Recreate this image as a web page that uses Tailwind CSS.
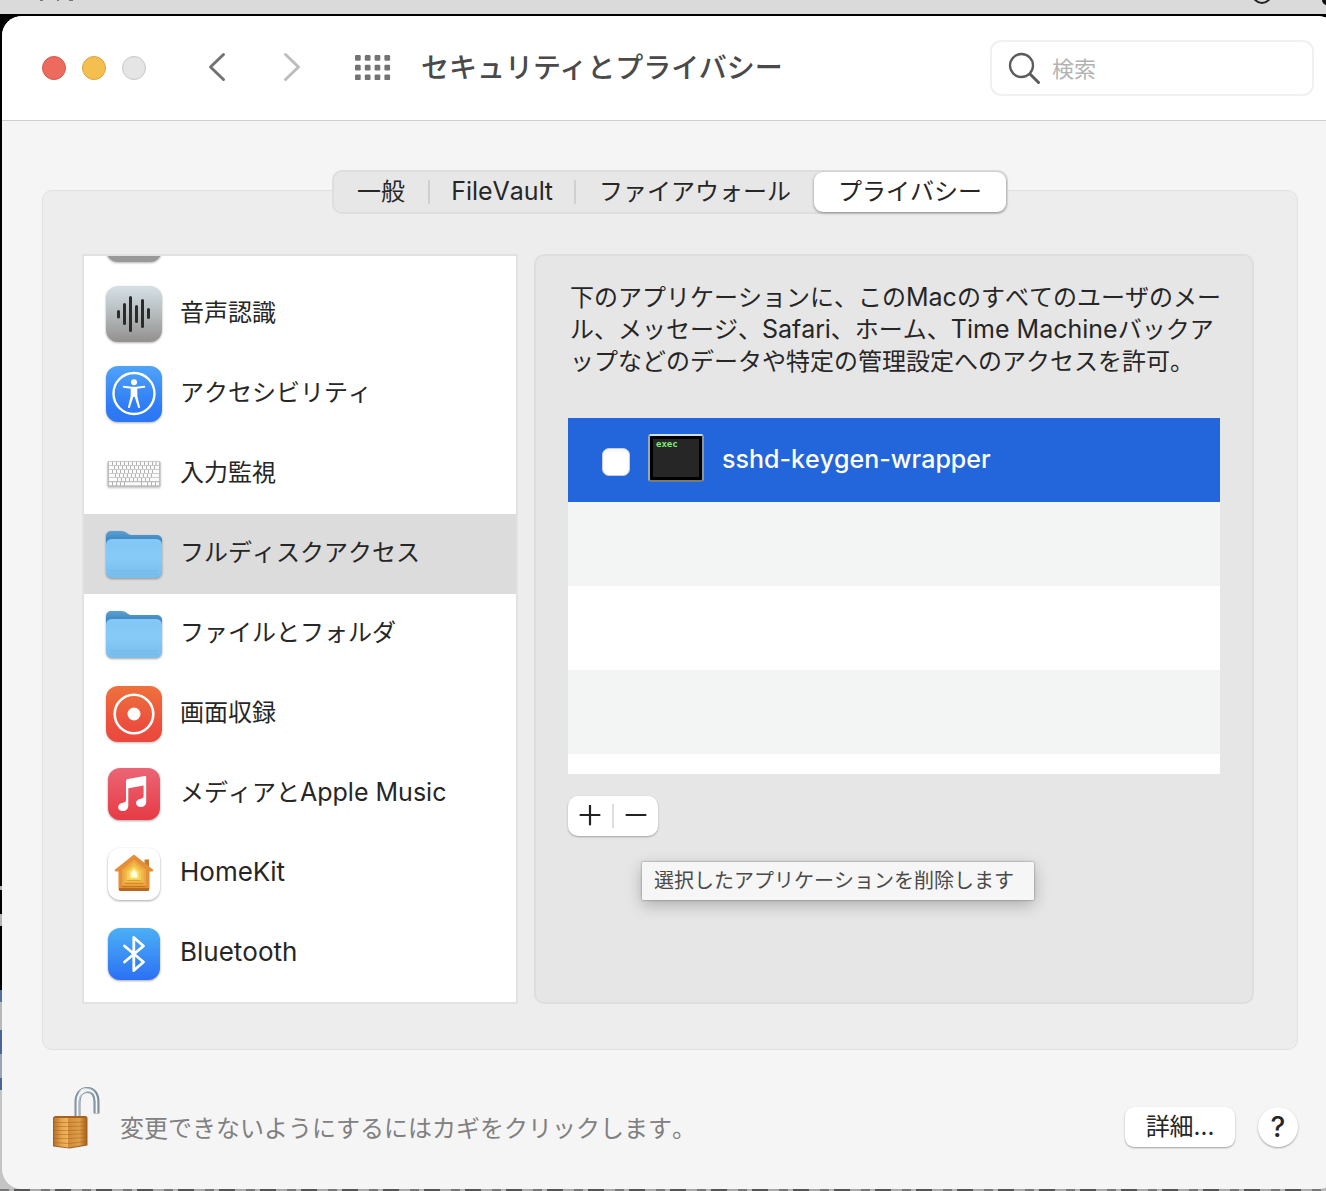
<!DOCTYPE html>
<html lang="ja">

<head>
    <meta charset="UTF-8">
    <meta name="viewport" content="width=device-width, initial-scale=1.0">
    <script src="https://cdn.jsdelivr.net/npm/@tailwindcss/browser@4"></script>
    <title>セキュリティとプライバシー</title>
</head>

<body class="relative flex min-h-screen flex-col overflow-hidden bg-black font-['Inter','Noto_Sans_CJK_JP',sans-serif] text-2xl text-[#262626] [font-kerning:none]">
    <!-- Desktop behind the window -->
    <div class="absolute inset-0 flex flex-col" aria-hidden="true">
        <div class="h-[886px]"></div>
        <div class="h-1 bg-[#b0b0b0]"></div>
        <div class="h-6"></div>
        <div class="h-3 bg-[#b4b4b4]"></div>
        <div class="h-16"></div>
        <div class="h-3 bg-[#5470a0]"></div>
        <div class="h-7 bg-[#b8b8b8]"></div>
        <div class="h-6 bg-[#4a6696]"></div>
        <div class="h-6 bg-[#9aa4b4]"></div>
        <div class="h-3 bg-[#4a6696]"></div>
        <div class="flex-1 bg-[#c4c4c4]"></div>
        <div class="h-[2px] bg-[repeating-linear-gradient(90deg,#777_0_9px,#b5b5b5_9px_14px,#555_14px_30px,#aaa_30px_41px)]"></div>
    </div>

    <!-- Menu bar -->
    <div class="relative mb-[2px] h-[14px] bg-[#dadada]">
        <svg class="h-[14px] w-full" aria-hidden="true">
            <path d="M40 0h3M57 0h2M69 0h4" stroke="#777" stroke-width="2" />
            <svg x="100%" overflow="visible">
                <circle cx="-64" cy="-6" r="9" fill="none" stroke="#222" stroke-width="2" />
                <circle cx="1" cy="0" r="5" fill="#111" />
            </svg>
        </svg>
    </div>

    <div class="relative -mr-3 mb-[2px] ml-[2px] flex flex-1 flex-col overflow-hidden rounded-[20px] bg-[#f5f5f5]">
        <header class="flex h-[105px] items-center border-b border-[#cfcfcf] bg-white pr-6 pl-10">
            <div class="flex gap-4">
                <button aria-label="閉じる" class="size-6 rounded-full border border-[#d9574c] bg-[#ec6a5e]"></button>
                <button aria-label="しまう" class="size-6 rounded-full border border-[#dba33b] bg-[#f5bf4f]"></button>
                <button aria-label="拡大" class="size-6 rounded-full border border-[#c6c6c6] bg-[#e5e5e5]"></button>
            </div>
            <button aria-label="戻る" class="ml-[59px]">
                <svg class="h-8 w-6" viewBox="0 0 24 32" fill="none" stroke="#737373" stroke-width="3" stroke-linecap="round" stroke-linejoin="round">
                    <path d="M18.500 2.500L5.500 15l13 12.500" />
                </svg>
            </button>
            <button aria-label="進む" class="ml-[51px]">
                <svg class="h-8 w-6" viewBox="0 0 24 32" fill="none" stroke="#bdbdbd" stroke-width="3" stroke-linecap="round" stroke-linejoin="round">
                    <path d="M5.500 2.500L18.500 15L5.500 27.500" />
                </svg>
            </button>
            <button aria-label="すべてを表示" class="ml-[51px]">
                <svg class="h-[26px] w-9" viewBox="0 0 36 26" fill="#737373">
                    <g id="dots">
                        <rect x="0" y="0" width="5.700" height="5.700" rx="1.200" />
                        <rect x="9.800" y="0" width="5.700" height="5.700" rx="1.200" />
                        <rect x="19.600" y="0" width="5.700" height="5.700" rx="1.200" />
                        <rect x="29.400" y="0" width="5.700" height="5.700" rx="1.200" />
                    </g>
                    <use href="#dots" y="9.700" />
                    <use href="#dots" y="19.400" />
                </svg>
            </button>
            <h1 class="ml-[30px] text-[28px] leading-8 font-medium text-[#4a4a4a] [font-kerning:auto]">セキュリティとプライバシー</h1>
            <label class="ml-auto flex h-14 w-[324px] items-center gap-3 rounded-[11px] border-2 border-[#f0f0f0] pl-4">
                <svg class="size-8 shrink-0" viewBox="0 0 32 32" fill="none" stroke="#5c5c5c" stroke-linecap="round">
                    <circle cx="13.500" cy="13.500" r="11.500" stroke-width="2.300" />
                    <path d="M22 22L30.500 30.500" stroke-width="3" />
                </svg>
                <input type="search" aria-label="検索" placeholder="検索" class="w-full min-w-0 pt-1 text-[22px] outline-none placeholder:text-[#b3b3b3]">
            </label>
        </header>

        <main class="flex flex-1 flex-col px-10 pt-[69px]">
            <section class="flex flex-col rounded-[10px] border border-[#e1e1e1] bg-[#ededed] pb-[45px]">
                <!-- Tabs -->
                <nav class="-mt-[21px] flex h-11 items-center self-center rounded-[10px] border-2 border-[#dedede] bg-[#e7e7e7]">
                    <button class="h-10 w-[94px]">一般</button>
                    <span class="h-6 w-[2px] bg-[#d0d0d0]"></span>
                    <button class="h-10 w-[144px] text-[25px]">FileVault</button>
                    <span class="h-6 w-[2px] bg-[#d0d0d0]"></span>
                    <button class="h-10 w-[238px]">ファイアウォール</button>
                    <button class="h-10 w-48 rounded-[9px] bg-white shadow-[0_1px_3px_rgba(0,0,0,0.4)]">プライバシー</button>
                </nav>

                <div class="mt-10 flex gap-4 pr-[43px] pl-[39px]">
                    <!-- Categories -->
                    <div class="w-[436px] shrink-0 overflow-hidden border-2 border-[#e2e2e2] bg-white">
                        <ul class="-mt-[62px] mb-2 [&>li>span]:pb-[3px]">
                            <li class="flex h-20 items-center gap-[18px] pl-[22px]">
                                <svg class="size-14 drop-shadow-[0_1px_1px_rgba(0,0,0,0.3)]" viewBox="0 0 56 56">
                                    <rect width="56" height="56" rx="12" fill="#999" />
                                </svg>
                            </li>
                            <li class="flex h-20 items-center gap-[18px] pl-[22px]">
                                <svg class="size-14 drop-shadow-[0_1px_1px_rgba(0,0,0,0.3)]" viewBox="0 0 56 56">
                                    <defs>
                                        <linearGradient id="voice" x2="0" y2="1">
                                            <stop stop-color="#d5e0e6" />
                                            <stop offset=".5" stop-color="#b5bbbd" />
                                            <stop offset="1" stop-color="#93908e" />
                                        </linearGradient>
                                    </defs>
                                    <rect width="56" height="56" rx="12" fill="url(#voice)" />
                                    <path d="M12.500 25.500v5.500M18.500 18.500v19M24.500 11.500v33M30.500 20.500v15M36.500 14.500v26M42.500 23.500v8" stroke="#2b2b2b" stroke-width="3" stroke-linecap="round" />
                                </svg>
                                <span>音声認識</span>
                            </li>
                            <li class="flex h-20 items-center gap-[18px] pl-[22px]">
                                <svg class="size-14 drop-shadow-[0_1px_1px_rgba(0,0,0,0.3)]" viewBox="0 0 56 56">
                                    <defs>
                                        <linearGradient id="access" x2="0" y2="1">
                                            <stop stop-color="#4fa3f8" />
                                            <stop offset=".7" stop-color="#2f7df6" />
                                            <stop offset="1" stop-color="#2c76f5" />
                                        </linearGradient>
                                    </defs>
                                    <rect width="56" height="56" rx="12" fill="url(#access)" />
                                    <circle cx="28" cy="27.500" r="20.500" fill="none" stroke="#fff" stroke-width="2.400" />
                                    <circle cx="28" cy="16.300" r="3" fill="#fff" />
                                    <path d="M17.800 20.800L25.500 21.800h5L38.200 20.800" fill="none" stroke="#fff" stroke-width="2" stroke-linecap="round" />
                                    <path d="M24.800 21h6.400l.2 9.500 2.600 10.500c.2 1.200-1.500 1.500-1.900.4L28.700 31h-1.400l-3.400 10.400c-.4 1.100-2.100.8-1.900-.4l2.600-10.500z" fill="#fff" />
                                </svg>
                                <span>アクセシビリティ</span>
                            </li>
                            <li class="flex h-20 items-center gap-[18px] pl-[22px]">
                                <svg class="size-14 drop-shadow-[0_1px_1px_rgba(0,0,0,0.25)]" viewBox="0 0 56 56">
                                    <rect x="1.500" y="15" width="53" height="26" rx="1.500" fill="#bdbdbd" />
                                    <path d="M3 17.400h50M3 21.400h50M3 25.400h50M3 29.400h50M3 33.400h50M3 37.800h50" stroke="#fbfbfb" stroke-width="3.100" />
                                    <path d="M6.500 15.500v4M10.500 15.500v4M14.500 15.500v4M18.500 15.500v4M22.500 15.500v4M26.500 15.500v4M30.500 15.500v4M34.500 15.500v4M38.500 15.500v4M42.500 15.500v4M46.500 15.500v4M50 15.500v4M8.500 20v3M12.500 20v3M16.500 20v3M20.500 20v3M24.500 20v3M28.500 20v3M32.500 20v3M36.500 20v3M40.500 20v3M44.500 20v3M48.500 20v3M6.500 24v3M10.500 24v3M14.500 24v3M18.500 24v3M22.500 24v3M26.500 24v3M30.500 24v3M34.500 24v3M38.500 24v3M42.500 24v3M46.500 24v3M9.500 28v3M13.500 28v3M17.500 28v3M21.500 28v3M25.500 28v3M29.500 28v3M33.500 28v3M37.500 28v3M41.500 28v3M45.500 28v3M11.500 32v3M15.500 32v3M19.500 32v3M23.500 32v3M27.500 32v3M31.500 32v3M35.500 32v3M39.500 32v3M43.500 32v3M6.500 36v4M10.500 36v4M14.500 36v4M18.500 36v4M35.500 36v4M41.500 36v4M45.500 36v4M49.500 36v4" stroke="#b3b3b3" stroke-width="1" />
                                </svg>
                                <span>入力監視</span>
                            </li>
                            <li class="flex h-20 items-center gap-[18px] bg-[#dcdcdc] pl-[22px]">
                                <svg class="size-14 overflow-visible drop-shadow-[0_1px_1px_rgba(0,0,0,0.35)]" viewBox="0 0 56 56">
                                    <defs>
                                        <linearGradient id="folderBack" x2="0" y2="1">
                                            <stop stop-color="#5aa1d3" />
                                            <stop offset=".3" stop-color="#3a80bd" />
                                        </linearGradient>
                                        <linearGradient id="folderFront" x2="0" y2="1">
                                            <stop stop-color="#82c7f5" />
                                            <stop offset=".5" stop-color="#86caf6" />
                                            <stop offset="1" stop-color="#78bdec" />
                                        </linearGradient>
                                    </defs>
                                    <g id="folder">
                                        <path d="M0 40V10a5 5 0 0 1 5-5h10c3 0 4.500 1 6 2.200S23.500 9 26 9h25a5 5 0 0 1 5 5v27z" fill="url(#folderBack)" />
                                        <path d="M0 18.500a5.500 5.500 0 0 1 5.500-5.500h45a5.500 5.500 0 0 1 5.500 5.500V46a6 6 0 0 1-6 6H6a6 6 0 0 1-6-6z" fill="url(#folderFront)" />
                                        <path d="M4 45h48M4 48h48" stroke="#6fb5e6" stroke-width=".7" />
                                    </g>
                                </svg>
                                <span>フルディスクアクセス</span>
                            </li>
                            <li class="flex h-20 items-center gap-[18px] pl-[22px]">
                                <svg class="size-14 overflow-visible drop-shadow-[0_1px_1px_rgba(0,0,0,0.35)]" viewBox="0 0 56 56">
                                    <use href="#folder" />
                                </svg>
                                <span>ファイルとフォルダ</span>
                            </li>
                            <li class="flex h-20 items-center gap-[18px] pl-[22px]">
                                <svg class="size-14 drop-shadow-[0_1px_1px_rgba(0,0,0,0.25)]" viewBox="0 0 56 56">
                                    <defs>
                                        <linearGradient id="record" x2="0" y2="1">
                                            <stop stop-color="#ee723b" />
                                            <stop offset=".7" stop-color="#ec4f3e" />
                                            <stop offset="1" stop-color="#eb483d" />
                                        </linearGradient>
                                    </defs>
                                    <rect width="56" height="56" rx="12" fill="url(#record)" />
                                    <circle cx="28" cy="28" r="19.300" fill="none" stroke="#fff" stroke-width="2.600" />
                                    <circle cx="28" cy="28" r="6.500" fill="#fff" />
                                </svg>
                                <span>画面収録</span>
                            </li>
                            <li class="flex h-20 items-center gap-[18px] pl-[22px]">
                                <svg class="size-14 overflow-visible drop-shadow-[0_1px_1px_rgba(0,0,0,0.35)]" viewBox="0 0 56 56">
                                    <defs>
                                        <linearGradient id="music" x2="0" y2="1">
                                            <stop stop-color="#ec6575" />
                                            <stop offset="1" stop-color="#e63b44" />
                                        </linearGradient>
                                    </defs>
                                    <rect x="2" y="2" width="52" height="52" rx="12" fill="url(#music)" />
                                    <path d="M20 15.500c0-1.400.6-2.200 2-2.500l16.500-3c1.200-.2 1.700.2 1.700 1.400V35.500c0 3.500-2.200 5.500-5.500 5.500-2.700 0-4.700-1.500-4.700-3.900 0-2.200 1.600-3.700 4-4.200 2.500-.5 3.600-.9 3.600-2.900V19.500L22.300 22.300V39.500c0 3.500-2.200 5.600-5.500 5.600-2.700 0-4.700-1.600-4.700-4 0-2.200 1.600-3.700 4-4.200 2.500-.4 3.900-.9 3.900-2.900z" fill="#fff" />
                                </svg>
                                <span>メディアと<span class="text-[25px]">Apple Music</span></span>
                            </li>
                            <li class="flex h-20 items-center gap-[18px] pl-[22px]">
                                <svg class="size-14 overflow-visible drop-shadow-[0_1px_1px_rgba(0,0,0,0.35)]" viewBox="0 0 56 56">
                                    <rect x="2" y="2" width="52" height="52" rx="12" fill="#fff" />
                                    <path d="M38.500 13.500h4.500v9h-4.500z" fill="#c77b2c" />
                                    <path d="M28 8.500L47.500 24l-1 1.500H43.500V43a2 2 0 0 1-2 2h-27a2 2 0 0 1-2-2V25.500H9.500L8.500 24z" fill="#e48f35" />
                                    <path d="M13 42h30v1.500a1.500 1.500 0 0 1-1.500 1.500h-27a1.500 1.500 0 0 1-1.500-1.500z" fill="#b9681f" />
                                    <path d="M28 13.500L40 23.500V41H16V23.500z" fill="#eda640" />
                                    <path d="M16 39.800h24v1.200H16z" fill="#c9781f" />
                                    <path d="M28 16.500L37.500 24.500V38H18.500V24.500z" fill="#f1b947" />
                                    <path d="M18.500 36.800h19v1.200h-19z" fill="#d08a28" />
                                    <path d="M28 19.500L35 25.500V35H21V25.500z" fill="#f6ce55" />
                                    <path d="M21 34h14v1H21z" fill="#dca238" />
                                    <path d="M28 22L32.500 26V32.500H23.500V26z" fill="#fae87e" />
                                    <path d="M28 24L31 27V31.500H25V27z" fill="#fffbe0" />
                                </svg>
                                <span class="text-[26px]">HomeKit</span>
                            </li>
                            <li class="flex h-20 items-center gap-[18px] pl-[22px]">
                                <svg class="size-14 overflow-visible drop-shadow-[0_1px_1px_rgba(0,0,0,0.35)]" viewBox="0 0 56 56">
                                    <defs>
                                        <linearGradient id="bluetooth" x2="0" y2="1">
                                            <stop stop-color="#4bb0f6" />
                                            <stop offset="1" stop-color="#2b70f5" />
                                        </linearGradient>
                                    </defs>
                                    <rect x="2" y="2" width="52" height="52" rx="12" fill="url(#bluetooth)" />
                                    <path d="M18.500 20L37.500 36L27.800 44.500V11.500L37.500 20L18.500 36" fill="none" stroke="#fff" stroke-width="2.800" stroke-linecap="round" stroke-linejoin="round" />
                                </svg>
                                <span class="text-[26px]">Bluetooth</span>
                            </li>
                        </ul>
                    </div>

                    <!-- Full disk access -->
                    <div class="min-w-0 flex-1 rounded-[10px] border-2 border-[#dedede] bg-[#e6e6e6] px-8 pt-[26px]">
                        <p class="pl-[2px] leading-8 whitespace-nowrap">下のアプリケーションに、この<span class="text-[25px] leading-none">Mac</span>のすべてのユーザのメー<br>ル、メッセージ、<span class="text-[25px] leading-none">Safari</span>、ホーム、<span class="text-[25px] leading-none">Time Machine</span>バックア<br>ップなどのデータや特定の管理設定へのアクセスを許可。</p>

                        <ul class="mt-10 bg-white">
                            <li class="flex h-[84px] items-center bg-[#2365da] pl-[34px] text-white">
                                <input type="checkbox" id="sshd" class="mt-1 size-7 appearance-none rounded-[7px] border border-[#c9ced8] bg-white shadow-inner">
                                <label for="sshd" class="flex items-center gap-[18px] pl-[18px] text-[25px] font-medium">
                                    <span class="mb-1 h-12 w-14 rounded-[3px] border-2 border-t-[#cfe0ec] border-r-[#8c959c] border-b-[#77797a] border-l-[#9aa8b2] bg-black p-[3px]">
                                        <span class="block h-full bg-[#262626] pl-[3px] font-['DejaVu_Sans_Mono',monospace] text-[9px] leading-[10px] font-bold text-[#7df06c]">exec</span>
                                    </span>
                                    sshd-keygen-wrapper
                                </label>
                            </li>
                            <li class="h-[84px] bg-[#f3f5f4]"></li>
                            <li class="h-[84px]"></li>
                            <li class="h-[84px] bg-[#f3f5f4]"></li>
                            <li class="h-5"></li>
                        </ul>

                        <div class="relative mt-[22px] flex h-10 w-[90px] items-center rounded-[10px] bg-white shadow-[0_1px_2px_rgba(0,0,0,0.3)]">
                            <button aria-label="追加" class="flex h-full flex-1 items-center justify-center">
                                <svg class="size-[22px]" viewBox="0 0 22 22" stroke="#222" stroke-width="2.200" stroke-linecap="round">
                                    <path d="M1.500 10h19M11 .5v19" />
                                </svg>
                            </button>
                            <span class="h-6 w-[2px] bg-[#dedede]"></span>
                            <button aria-label="削除" class="flex h-full flex-1 items-center justify-center">
                                <svg class="size-[22px]" viewBox="0 0 22 22" stroke="#222" stroke-width="2.200" stroke-linecap="round">
                                    <path d="M1.500 10h19" />
                                </svg>
                            </button>
                            <div role="tooltip" class="absolute top-[66px] left-[74px] rounded-[1px] bg-[#f6f6f6] py-1 pr-5 pl-3 text-xl leading-[30px] whitespace-nowrap text-[#4a4a4a] shadow-[0_0_2px_rgba(0,0,0,0.5),0_5px_16px_rgba(0,0,0,0.25)]">選択したアプリケーションを削除します</div>
                        </div>
                    </div>
                </div>
            </section>

            <footer class="flex items-center pt-[35px]">
                <button class="flex items-center gap-[18px] pl-[10px] text-[#808080]">
                    <svg class="h-16 w-[50px]" viewBox="0 0 50 64">
                        <defs>
                            <linearGradient id="steel" x2="1" y2="0">
                                <stop stop-color="#8b99a5" />
                                <stop offset=".25" stop-color="#f0f6fa" />
                                <stop offset=".6" stop-color="#a9b8c3" />
                                <stop offset="1" stop-color="#7f8d99" />
                            </linearGradient>
                            <linearGradient id="brassLeft" x2="1" y2="0">
                                <stop stop-color="#b8752a" />
                                <stop offset=".5" stop-color="#e4a34c" />
                                <stop offset="1" stop-color="#f0b962" />
                            </linearGradient>
                            <linearGradient id="brassRight" x2="1" y2="0">
                                <stop stop-color="#cf8c38" />
                                <stop offset=".6" stop-color="#dda04a" />
                                <stop offset="1" stop-color="#a8641f" />
                            </linearGradient>
                        </defs>
                        <path d="M25.500 34V17c0-7.500 4-12 9.800-12S44.500 9.500 44.500 17V28.500" fill="none" stroke="#7c8993" stroke-width="6" />
                        <path d="M25.500 34V17c0-7.500 4-12 9.800-12S44.500 9.500 44.500 17V28" fill="none" stroke="url(#steel)" stroke-width="4.600" />
                        <path d="M25.500 34V17c0-7.500 4-12 9.800-12S44.500 9.500 44.500 17V28" fill="none" stroke="#f3f8fb" stroke-width="1.800" />
                        <path d="M1 32.500l2-1.500h31L35.500 32.500v28l-18 3L1 61.500z" fill="#a8621f" />
                        <path d="M2 33h14.500V62.500L2 60.500z" fill="url(#brassLeft)" />
                        <path d="M16.500 33H34.500V59.500L16.500 62.500z" fill="url(#brassRight)" />
                        <path d="M2 37.500h14.500l18-.5M2 41.500h14.500l18-.5M2 45.500h14.500l18-.5M2 49.500h14.500l18-1M2 53.500h14.500l18-1M2 57.500l14.500 1 18-2" fill="none" stroke="#a9621b" stroke-width="1.100" opacity=".5" />
                    </svg>
                    <span class="pt-6">変更できないようにするにはカギをクリックします。</span>
                </button>
                <div class="ml-auto flex items-center gap-[23px] pt-5">
                    <button class="h-10 w-[110px] rounded-[9px] bg-white shadow-[0_1px_2px_rgba(0,0,0,0.35)]">詳細...</button>
                    <button aria-label="ヘルプ" class="size-10 rounded-full bg-white text-[28px] leading-10 font-medium shadow-[0_1px_2px_rgba(0,0,0,0.35)]">?</button>
                </div>
            </footer>
        </main>
    </div>
</body>

</html>
